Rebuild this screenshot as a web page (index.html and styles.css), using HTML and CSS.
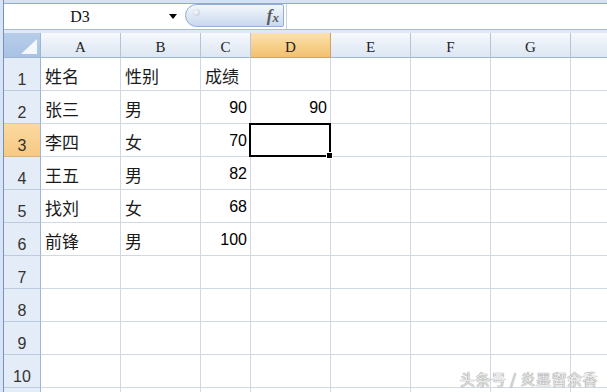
FILE: index.html
```html
<!DOCTYPE html>
<html lang="zh-CN">
<head>
    <meta charset="UTF-8">
    <title>Sheet1</title>
    <link rel="stylesheet" href="styles.css">
</head>
<body>
    <div class="window">
        <div class="edge"></div>
        <div class="main">
            <div class="formula-bar">
                <div class="name-box">
                    <span class="name">D3</span>
                    <span class="arrow"></span>
                </div>
                <div class="pill">
                    <span class="knob"></span>
                    <span class="fx">f<sub>x</sub></span>
                </div>
                <div class="input"></div>
            </div>
            <div class="gap"></div>

            <div class="sheet">
                <div class="corner">
                    <svg width="16" height="15" viewBox="0 0 16 15"><polygon points="16,0 16,15 0,15" fill="#f4f7fb"/></svg>
                </div>
                <div class="col-head">A</div>
                <div class="col-head">B</div>
                <div class="col-head">C</div>
                <div class="col-head active">D</div>
                <div class="col-head">E</div>
                <div class="col-head">F</div>
                <div class="col-head">G</div>
                <div class="col-head"></div>

                <div class="row-head">1</div>
                <div class="cell">姓名</div>
                <div class="cell">性别</div>
                <div class="cell">成绩</div>
                <div class="cell"></div><div class="cell"></div><div class="cell"></div><div class="cell"></div><div class="cell"></div>

                <div class="row-head">2</div>
                <div class="cell">张三</div>
                <div class="cell">男</div>
                <div class="cell num">90</div>
                <div class="cell num">90</div>
                <div class="cell"></div><div class="cell"></div><div class="cell"></div><div class="cell"></div>

                <div class="row-head active">3</div>
                <div class="cell">李四</div>
                <div class="cell">女</div>
                <div class="cell num">70</div>
                <div class="cell selected"><span class="handle"></span></div>
                <div class="cell"></div><div class="cell"></div><div class="cell"></div><div class="cell"></div>

                <div class="row-head">4</div>
                <div class="cell">王五</div>
                <div class="cell">男</div>
                <div class="cell num">82</div>
                <div class="cell"></div><div class="cell"></div><div class="cell"></div><div class="cell"></div><div class="cell"></div>

                <div class="row-head">5</div>
                <div class="cell">找刘</div>
                <div class="cell">女</div>
                <div class="cell num">68</div>
                <div class="cell"></div><div class="cell"></div><div class="cell"></div><div class="cell"></div><div class="cell"></div>

                <div class="row-head">6</div>
                <div class="cell">前锋</div>
                <div class="cell">男</div>
                <div class="cell num">100</div>
                <div class="cell"></div><div class="cell"></div><div class="cell"></div><div class="cell"></div><div class="cell"></div>

                <div class="row-head">7</div>
                <div class="cell"></div><div class="cell"></div><div class="cell"></div><div class="cell"></div><div class="cell"></div><div class="cell"></div><div class="cell"></div><div class="cell"></div>

                <div class="row-head">8</div>
                <div class="cell"></div><div class="cell"></div><div class="cell"></div><div class="cell"></div><div class="cell"></div><div class="cell"></div><div class="cell"></div><div class="cell"></div>

                <div class="row-head">9</div>
                <div class="cell"></div><div class="cell"></div><div class="cell"></div><div class="cell"></div><div class="cell"></div><div class="cell"></div><div class="cell"></div><div class="cell"></div>

                <div class="row-head">10</div>
                <div class="cell"></div><div class="cell"></div><div class="cell"></div><div class="cell"></div><div class="cell"></div><div class="cell"></div><div class="cell"></div><div class="cell"></div>

                <div class="row-head"></div>
                <div class="cell"></div><div class="cell"></div><div class="cell"></div><div class="cell"></div><div class="cell"></div><div class="cell"></div><div class="cell"></div><div class="cell"></div>
            </div>
        </div>
    </div>
    <div class="watermark">头条号 / 炎墨留余香</div>
</body>
</html>
```

FILE: styles.css
```css
html, body {
    margin: 0;
    padding: 0;
    width: 607px;
    height: 392px;
    overflow: hidden;
    background-color: #fff;
}
.window {
    display: flex;
    height: 392px;
}
.edge {
    width: 3px;
    flex: none;
    background-color: #dae4f1;
    border-right: 1px solid #6f93c4;
}
.main {
    flex: 1;
    min-width: 0;
    overflow: hidden;
    border-top: 3px solid #d6e2f1;
}
.formula-bar {
    display: flex;
    height: 25px;
    border-top: 1px solid #8eacd2;
    border-bottom: 1px solid #a9bcd6;
    background-color: #fff;
}
.name-box {
    width: 181px;
    flex: none;
    display: flex;
    align-items: center;
}
.name {
    width: 152px;
    text-align: center;
    font-family: "Liberation Serif", serif;
    font-size: 16px;
    color: #111;
    padding-top: 1px;
}
.arrow {
    margin-left: 13px;
    width: 0;
    height: 0;
    border-left: 4px solid transparent;
    border-right: 4px solid transparent;
    border-top: 5px solid #000;
}
.pill {
    width: 99px;
    flex: none;
    height: 23px;
    box-sizing: border-box;
    border: 1px solid #93acd0;
    border-radius: 12px 2px 2px 12px;
    background: linear-gradient(#f3f7fc, #dce7f5 55%, #c8d8ee);
    display: flex;
    align-items: center;
    justify-content: space-between;
    padding: 0 4px 0 7px;
}
.knob {
    width: 7px;
    height: 7px;
    border-radius: 50%;
    background: radial-gradient(circle at 40% 40%, #fdfdfd, #b9c3cf);
    margin-top: -6px;
}
.fx {
    font-family: "Liberation Serif", serif;
    font-style: italic;
    font-weight: bold;
    font-size: 17px;
    color: #5a5a5a;
    line-height: 1;
}
.fx sub {
    font-size: 13px;
    vertical-align: -1px;
}
.input {
    flex: 1;
    border-left: 1px solid #c4d2e4;
    margin-left: 2px;
}
.gap {
    height: 3px;
    background-color: #dfe8f4;
}
.sheet {
    display: grid;
    grid-template-columns: 37px 80px 80px 50px 80px 80px 80px 80px 80px;
    grid-template-rows: 25px repeat(11, 33px);
}
.sheet > div {
    box-sizing: border-box;
}
.corner {
    background: linear-gradient(#b7cde9, #a9c2e4);
    border-right: 1px solid #9eb6ce;
    border-bottom: 1px solid #9eb6ce;
    display: flex;
    align-items: flex-end;
    justify-content: flex-end;
    padding: 0 3px 3px 0;
}
.corner svg {
    display: block;
}
.col-head {
    background: linear-gradient(#f7f9fd, #e9eff8 50%, #dce6f3);
    border-right: 1px solid #b4c4d9;
    border-bottom: 1px solid #9eb6ce;
    display: flex;
    align-items: center;
    justify-content: center;
    font-family: "Liberation Serif", serif;
    font-size: 15px;
    color: #222;
    padding-top: 4px;
}
.col-head.active {
    background: linear-gradient(#fbe1b0, #f8d18c 50%, #f3c070);
    border-right-color: #c8a46a;
    border-bottom-color: #c8a46a;
}
.row-head {
    background-color: #e4ecf7;
    border-right: 1px solid #9eb6ce;
    border-bottom: 1px solid #bccbe0;
    display: flex;
    align-items: flex-end;
    justify-content: center;
    font-family: "Liberation Sans", sans-serif;
    font-size: 16px;
    color: #333;
    padding-bottom: 1px;
}
.row-head.active {
    background: linear-gradient(#fbd9a0, #f7c983);
    border-bottom-color: #d9b277;
}
.cell {
    border-right: 1px solid #d0d7e5;
    border-bottom: 1px solid #d0d7e5;
    display: flex;
    align-items: center;
    padding: 2px 4px 0 4px;
    font-family: "Noto Sans CJK SC", sans-serif;
    font-size: 17px;
    color: #1a1a1a;
    white-space: nowrap;
}
.num {
    justify-content: flex-end;
    font-family: "Liberation Sans", sans-serif;
    font-size: 16px;
    color: #000;
    padding: 1px 3px 0 4px;
}
.selected {
    position: relative;
}
.selected::after {
    content: "";
    position: absolute;
    left: -2px;
    top: -1px;
    right: -1px;
    bottom: -1px;
    border: 2px solid #000;
}
.handle {
    position: absolute;
    right: -3px;
    bottom: -3px;
    width: 5px;
    height: 5px;
    background-color: #000;
    border: 1px solid #fff;
    z-index: 1;
}
.watermark {
    position: absolute;
    right: 9px;
    bottom: 3px;
    font-family: "Noto Sans CJK SC", sans-serif;
    font-size: 15px;
    color: #e9e9e9;
    text-shadow: 0 0 1px #777, 0 0 1px #999;
    letter-spacing: 0.5px;
}
```
